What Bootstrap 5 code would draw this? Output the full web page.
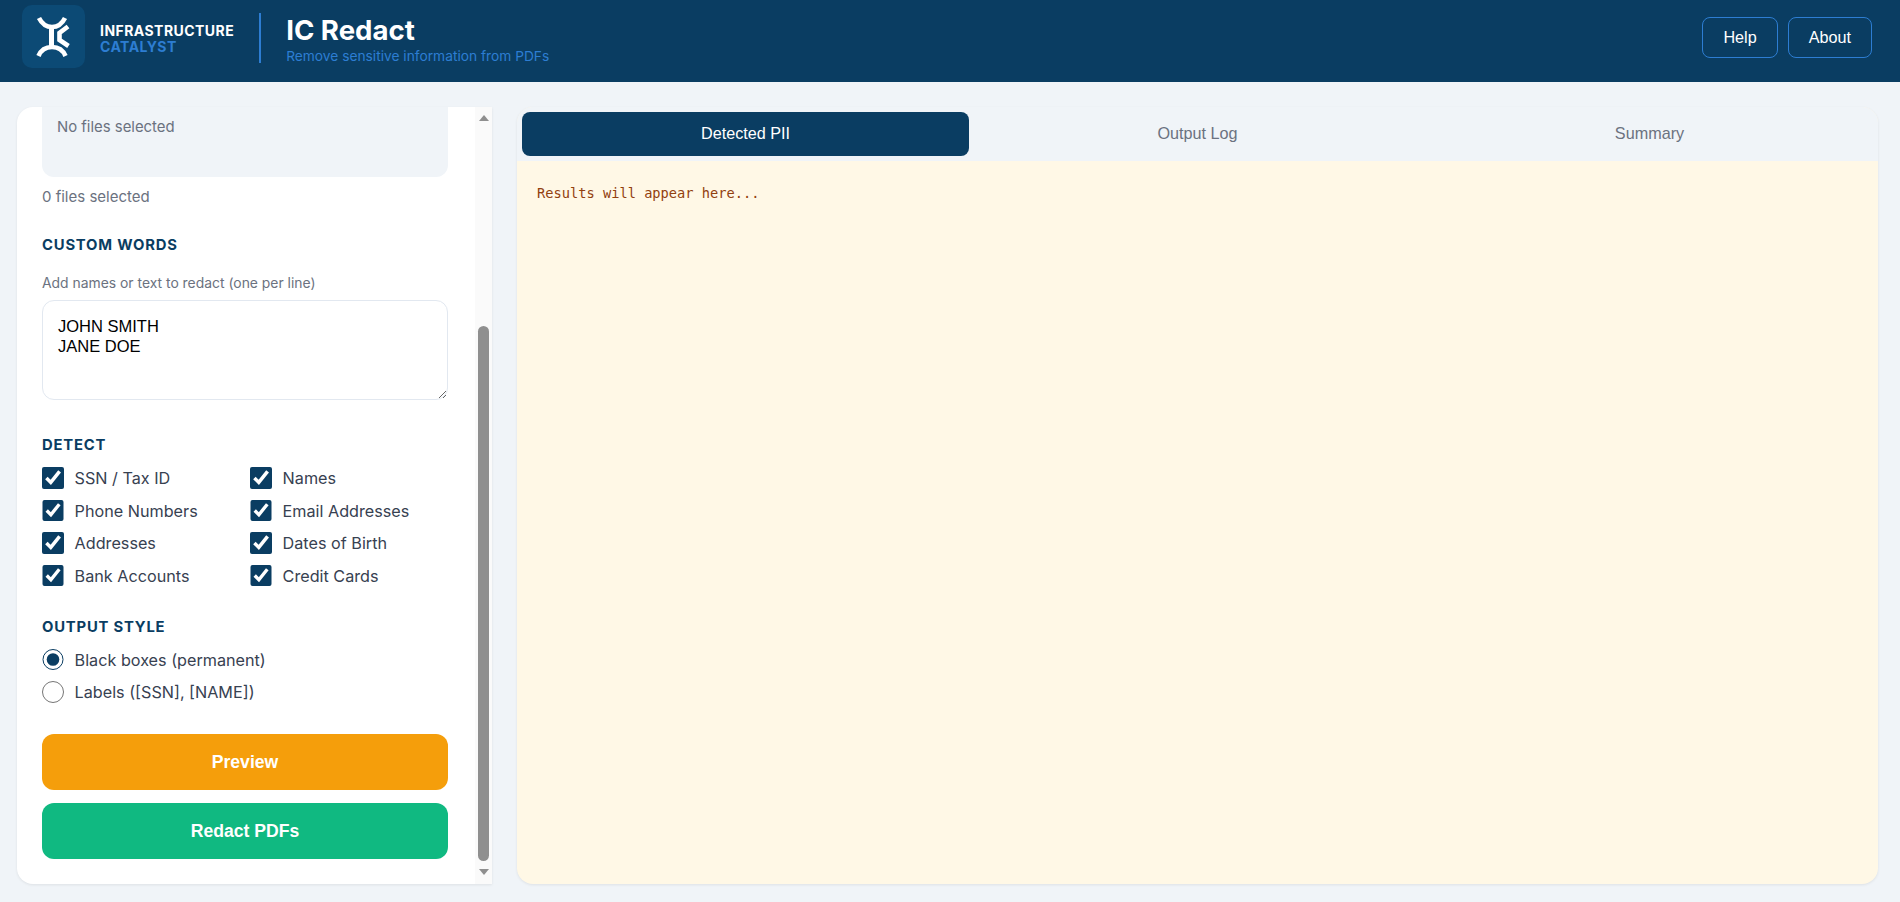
<!doctype html>
<html lang="en">
<head>
<meta charset="utf-8">
<title>IC Redact</title>
<link rel="stylesheet" href="https://cdn.jsdelivr.net/npm/bootstrap@5.3.0/dist/css/bootstrap.min.css">
<style>
html,body{height:100%;overflow:hidden}
body{background:#f0f4f8;font-family:Inter,"Liberation Sans",sans-serif;color:#374151}
.app-top{height:82px;background:#0a3d62;padding:0 28px 8px 22px}
.logo-tile{width:63px;height:63px;background:#0c4a75;border-radius:10px;margin-bottom:2px}
.brand-wrap{margin:3px 0 0 15px}
.brand-a{font-size:14px;font-weight:700;line-height:16px;color:#fff;letter-spacing:.45px}
.brand-b{font-size:14px;font-weight:700;line-height:16px;color:#2d7dd2;letter-spacing:.45px}
.top-rule{width:2px;height:50px;background:#2d7dd2;margin:2px 25px 0 25px}
.title-wrap{margin-top:3.5px}
.app-title{font-size:27.6px;font-weight:700;color:#fff;line-height:32px;margin:0}
.app-sub{font-size:13.76px;color:#2d7dd2;line-height:16px;margin-top:1.5px}
.top-actions{gap:10px}
.top-btn{font-family:"Liberation Sans",sans-serif;font-size:16.2px;color:#fff;border:1.5px solid #2d7dd2;border-radius:8px;height:41px;padding:0 20px;background:transparent}
.top-btn:hover{color:#fff;border-color:#2d7dd2}
.work{height:820px;padding:25px 22px 18px 17px;gap:25px}
.side{width:475px;flex:none;background:#fff;border-radius:16px 0 0 16px;box-shadow:0 1px 3px rgba(0,0,0,.08)}
.side-body{flex:1;min-width:0;padding:0 27px 25px 25px;justify-content:flex-end}
.side-body>*{flex:none}
.file-box{height:90px;background:#f0f4f8;border-radius:12px;padding:29px 15px 0;font-size:14.9px;color:#6b7280;line-height:22px}
.file-count{font-size:15px;color:#6b7280;line-height:20px;margin-top:10px}
.sec-head{font-size:14.8px;font-weight:700;color:#0a3d62;letter-spacing:.8px;line-height:18px;margin:0}
.head-words{margin-top:29px}
.head-detect{margin:36px 0 13px}
.head-output{margin:31px 0 13px}
.hint-text{font-size:13.9px;color:#6b7280;line-height:18px;margin:20px 0 8px}
.words-box{height:100px;border:1.5px solid #e2e8f0;border-radius:12px;padding:15px;font-family:"Liberation Sans",sans-serif;font-size:16.5px;line-height:20px;color:#000}
.opt-grid{display:grid;grid-template-columns:208px 1fr;row-gap:10.5px}
.opt-stack{gap:10.5px}
.opt-row{display:flex;align-items:center;font-size:16.2px;line-height:22px;color:#374151;margin:0}
.opt-row input{appearance:auto;width:21.6px;height:21.6px;margin:0 11px 0 0;accent-color:#0a3d62;flex:none}
.act-btn{height:56px;border:0;border-radius:12px;color:#fff;font-weight:700;font-size:17.6px;font-family:"Liberation Sans",sans-serif;width:100%}
.act-amber,.act-amber:hover{background:#f59e0b;color:#fff;margin-top:31px}
.act-green,.act-green:hover{background:#10b981;color:#fff;margin-top:13px}
.rail{width:17px;flex:none;background:#fafafa;padding:8px 3px 9px 3px}
.rail-up,.rail-down{width:0;height:0;border-left:5px solid transparent;border-right:5px solid transparent;margin:0 auto}
.rail-up{border-bottom:6px solid #8f8f8f}
.rail-down{border-top:6px solid #8f8f8f}
.rail-space{flex:1;justify-content:flex-end;display:flex;flex-direction:column;padding:0 0 8px}
.rail-thumb{height:535px;background:#8f8f8f;border-radius:6px;width:11px;margin:0 auto}
.main-card{flex:1;min-width:0;background:#fff8e6;border-radius:16px;overflow:hidden;box-shadow:0 1px 3px rgba(0,0,0,.08)}
.tab-strip{background:#f0f4f8;padding:5px;gap:5px;height:54px;flex:none}
.tab-item{flex:1 1 0;border:0;background:transparent;font-family:"Liberation Sans",sans-serif;font-size:16.2px;color:#6b7280;border-radius:8px;height:44px;padding:0 0 1px}
.tab-item.is-on{background:#0a3d62;color:#fff}
.result-text{padding:20px 20px;margin:0;font-family:"DejaVu Sans Mono","Liberation Mono",monospace;font-size:13.7px;line-height:24px;color:#92400e}
</style>
</head>
<body>
<header class="app-top d-flex align-items-center justify-content-between">
  <div class="d-flex align-items-center">
    <div class="logo-tile d-flex align-items-center justify-content-center">
      <svg width="63" height="63" viewBox="0 0 63 63" fill="none" stroke="#fff" stroke-width="4.6">
        <path d="M17 13 C20 19 24 22 30 22 C35 22 40 19 43 13"/>
        <path d="M16.5 51 C19 45 24 42 30 42 C36 42 41 45 43.5 51"/>
        <path d="M29.5 21 V43" stroke-width="5"/>
        <path d="M46 21.5 L37.5 28 V35 L46.5 41"/>
      </svg>
    </div>
    <div class="brand-wrap">
      <div class="brand-a">INFRASTRUCTURE</div>
      <div class="brand-b">CATALYST</div>
    </div>
    <div class="top-rule"></div>
    <div class="title-wrap">
      <h1 class="app-title">IC Redact</h1>
      <div class="app-sub">Remove sensitive information from PDFs</div>
    </div>
  </div>
  <div class="d-flex top-actions">
    <button class="btn top-btn" type="button">Help</button>
    <button class="btn top-btn" type="button">About</button>
  </div>
</header>
<main class="work d-flex">
  <aside class="side d-flex overflow-hidden">
    <div class="side-body d-flex flex-column">
      <div class="file-box">No files selected</div>
      <div class="file-count">0 files selected</div>
      <h2 class="sec-head head-words">CUSTOM WORDS</h2>
      <label class="hint-text" for="words">Add names or text to redact (one per line)</label>
      <textarea id="words" class="form-control words-box">JOHN SMITH
JANE DOE</textarea>
      <h2 class="sec-head head-detect">DETECT</h2>
      <div class="opt-grid">
        <label class="opt-row"><input type="checkbox" checked>SSN / Tax ID</label>
        <label class="opt-row"><input type="checkbox" checked>Names</label>
        <label class="opt-row"><input type="checkbox" checked>Phone Numbers</label>
        <label class="opt-row"><input type="checkbox" checked>Email Addresses</label>
        <label class="opt-row"><input type="checkbox" checked>Addresses</label>
        <label class="opt-row"><input type="checkbox" checked>Dates of Birth</label>
        <label class="opt-row"><input type="checkbox" checked>Bank Accounts</label>
        <label class="opt-row"><input type="checkbox" checked>Credit Cards</label>
      </div>
      <h2 class="sec-head head-output">OUTPUT STYLE</h2>
      <div class="d-flex flex-column opt-stack">
        <label class="opt-row"><input type="radio" name="style" checked>Black boxes (permanent)</label>
        <label class="opt-row"><input type="radio" name="style">Labels ([SSN], [NAME])</label>
      </div>
      <button class="btn act-btn act-amber" type="button">Preview</button>
      <button class="btn act-btn act-green" type="button">Redact PDFs</button>
    </div>
    <div class="rail d-flex flex-column">
      <div class="rail-up"></div>
      <div class="rail-space"><div class="rail-thumb"></div></div>
      <div class="rail-down"></div>
    </div>
  </aside>
  <section class="main-card d-flex flex-column">
    <div class="tab-strip d-flex">
      <button class="tab-item is-on" type="button">Detected PII</button>
      <button class="tab-item" type="button">Output Log</button>
      <button class="tab-item" type="button">Summary</button>
    </div>
    <pre class="result-text">Results will appear here...</pre>
  </section>
</main>
<script src="https://cdn.jsdelivr.net/npm/bootstrap@5.3.0/dist/js/bootstrap.bundle.min.js"></script>
</body>
</html>
